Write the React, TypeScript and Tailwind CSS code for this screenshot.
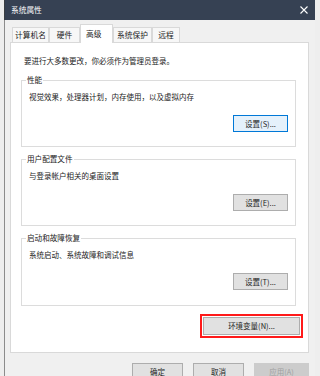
import React from "react";

function Btn({ label, w, focused }: { label: string; w: string; focused?: boolean }) {
  return (
    <div
      className={`${w} h-[17px] flex items-center justify-center text-[7.5px] leading-none text-[#1e1e1e] border ${
        focused ? "border-[#0078d7] bg-[#e5f1fb]" : "border-[#adadad] bg-[#e1e1e1]"
      }`}
    >
      {label}
    </div>
  );
}

function Group({ title, desc, btn, focused, h }: { title: string; desc: string; btn: string; focused?: boolean; h: string }) {
  return (
    <div className={`relative ${h} border border-[#dcdcdc] flex flex-col pt-[10px] px-[7px]`}>
      <span className="absolute top-[-6px] left-[4px] bg-white px-[1px] text-[7.6px] leading-[10px] text-[#222222]">{title}</span>
      <div className="h-[12px] flex items-center text-[7.5px] leading-none text-[#222222]">{desc}</div>
      <div className="flex justify-end pt-[12px]">
        <Btn label={btn} w="w-[55px]" focused={focused} />
      </div>
    </div>
  );
}

export default function App() {
  const tabs = [
    { t: "计算机名", w: "w-[37px]" },
    { t: "硬件", w: "w-[31px]" },
    { t: "高级", w: "w-[33px]", sel: true },
    { t: "系统保护", w: "w-[39px]" },
    { t: "远程", w: "w-[28px]" },
  ];
  return (
    <div className="w-[320px] h-[376px] overflow-hidden bg-[#eeeeee] flex flex-col font-['Noto_Sans_CJK_SC',sans-serif]">
      <div className="flex shrink-0 pl-[4px] pr-[5px]">
        <div className="flex-1 h-[20px] bg-gray-700 border-l border-[#3a3f43] flex items-center justify-between pl-[6px] pr-[7px]">
          <span className="text-[7.7px] leading-none text-white">系统属性</span>
          <svg width="8" height="8" viewBox="0 0 8 8">
            <path d="M0.5 0.5 L7.5 7.5 M7.5 0.5 L0.5 7.5" stroke="white" strokeWidth="1.1" />
          </svg>
        </div>
      </div>
      <div className="flex-1 flex pl-[4px] pr-[5px]">
        <div className="flex-1 flex flex-col border-l border-[#8c8c8c] bg-[#f0f0f0] pl-[5px] pr-[6px] pt-[4px]">
          <div className="flex items-end h-[18px] pl-[2px] relative z-10">
            {tabs.map((tb) =>
              tb.sel ? (
                <div
                  key={tb.t}
                  className={`${tb.w} h-[19px] mb-[-1px] bg-white border border-b-0 border-[#d9d9d9] flex items-center pl-[5px] text-[7.7px] leading-none text-[#222222]`}
                >
                  {tb.t}
                </div>
              ) : (
                <div
                  key={tb.t}
                  className={`${tb.w} h-[15px] bg-[#f7f7f7] border border-b-0 border-[#d9d9d9] flex items-center justify-center text-[7.7px] leading-none text-[#222222]`}
                >
                  {tb.t}
                </div>
              )
            )}
          </div>
          <div className="h-[311px] shrink-0 bg-white border border-[#d9d9d9] flex flex-col pt-[12px] pl-[10px] pr-[12px]">
            <div className="h-[12px] flex items-center pl-[3px] text-[7.5px] leading-none text-[#222222]">要进行大多数更改，你必须作为管理员登录。</div>
            <div className="pt-[13px] flex flex-col gap-[12px]">
              <Group title="性能" desc="视觉效果，处理器计划，内存使用，以及虚拟内存" btn="设置(S)..." focused h="h-[67px]" />
              <Group title="用户配置文件" desc="与登录帐户相关的桌面设置" btn="设置(E)..." h="h-[67px]" />
              <Group title="启动和故障恢复" desc="系统启动、系统故障和调试信息" btn="设置(T)..." h="h-[68px]" />
            </div>
            <div className="flex justify-end pt-[8px] mr-[-7px]">
              <div className="border-2 border-[#ff1a1a] p-[1px]">
                <div className="w-[97px] h-[18px] flex items-center justify-center text-[7.5px] leading-none text-[#1e1e1e] border border-[#adadad] bg-[#e1e1e1]">
                  环境变量(N)...
                </div>
              </div>
            </div>
          </div>
          <div className="flex justify-end gap-[10px] pt-[10px]">
            <div className="w-[51px] h-[18px] flex items-center justify-center text-[7.5px] leading-none text-[#1e1e1e] border border-[#adadad] bg-[#e1e1e1]">确定</div>
            <div className="w-[51px] h-[18px] flex items-center justify-center text-[7.5px] leading-none text-[#1e1e1e] border border-[#adadad] bg-[#e1e1e1]">取消</div>
            <div className="w-[55px] h-[18px] flex items-center justify-center text-[7.5px] leading-none text-[#a0a0a0] border border-[#cccccc] bg-[#cccccc]">应用(A)</div>
          </div>
        </div>
      </div>
    </div>
  );
}
